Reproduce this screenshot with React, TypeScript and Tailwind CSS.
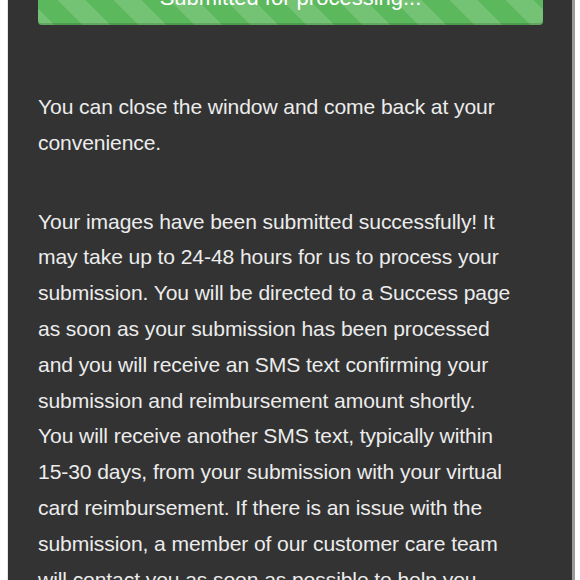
import React from "react";

export default function App() {
  const font = { fontFamily: '"Liberation Sans", Arial, sans-serif' };
  return (
    <div className="w-[580px] h-[580px] overflow-hidden bg-white flex" style={font}>
      <div className="w-[8px] shrink-0 bg-white border-r border-[#e4e4e4]" />
      <div className="flex-1 bg-[#333333] overflow-hidden">
        <div className="pl-[30px] pr-[29px]">
          <div className="-mt-[20px] h-[45px] rounded-[4px] bg-[#5cb85c] bg-[linear-gradient(45deg,rgba(255,255,255,.15)_25%,transparent_25%,transparent_50%,rgba(255,255,255,.15)_50%,rgba(255,255,255,.15)_75%,transparent_75%,transparent)] bg-[length:56px_56px] shadow-[inset_0_-2px_0_rgba(0,0,0,0.15)] flex items-start justify-center text-white text-[22px] leading-[26px]">
            <span className="mt-[5px]">Submitted for processing...</span>
          </div>
          <div className="text-[#ececec] text-[21.1px] leading-[35.8px] tracking-[-0.1px]">
            <p className="mt-[64px]">
              You can close the window and come back at your
              <br />
              convenience.
            </p>
            <p className="mt-[43px]">
              Your images have been submitted successfully! It
              <br />
              may take up to 24-48 hours for us to process your
              <br />
              submission. You will be directed to a Success page
              <br />
              as soon as your submission has been processed
              <br />
              and you will receive an SMS text confirming your
              <br />
              submission and reimbursement amount shortly.
              <br />
              You will receive another SMS text, typically within
              <br />
              15-30 days, from your submission with your virtual
              <br />
              card reimbursement. If there is an issue with the
              <br />
              submission, a member of our customer care team
              <br />
              will contact you as soon as possible to help you.
            </p>
          </div>
        </div>
      </div>
      <div className="w-[8px] shrink-0 bg-white border-l-[3px] border-[#9a9a9a]" />
    </div>
  );
}
